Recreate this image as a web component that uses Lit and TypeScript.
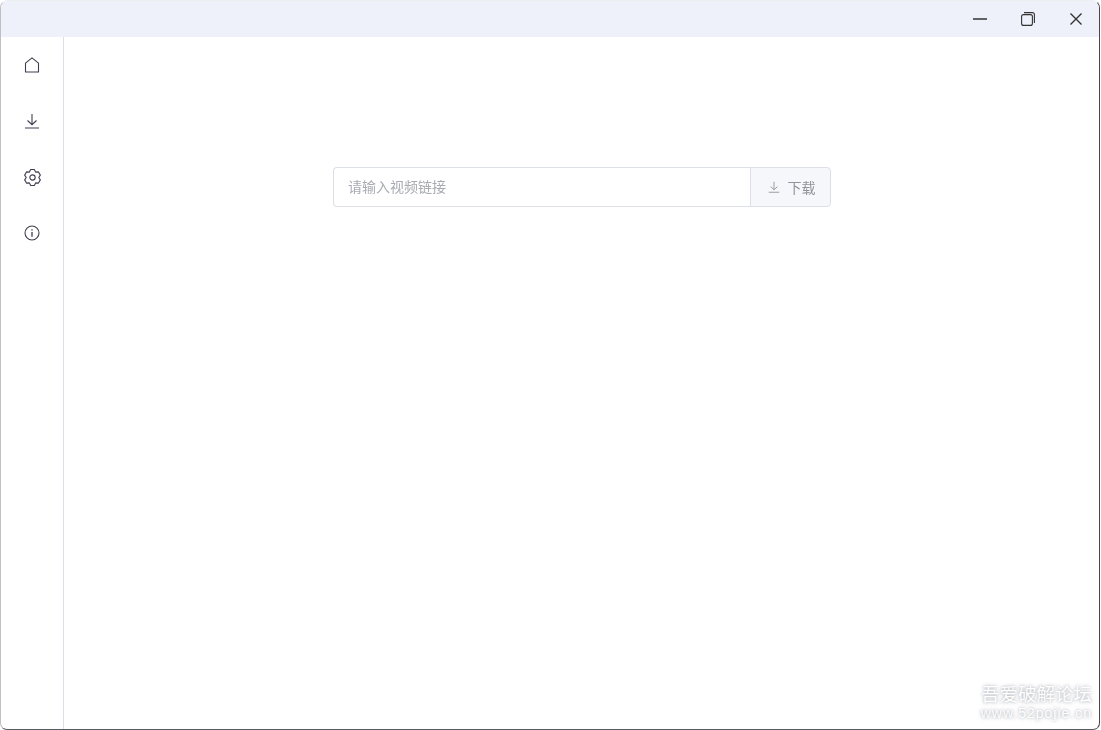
import { LitElement, html, css } from "lit";
import { customElement } from "lit/decorators.js";

function gearPath(): string {
  const pts: string[] = [];
  for (let i = 0; i < 6; i++) {
    const a = -90 + 60 * i;
    const p = (deg: number, r: number) => {
      const t = (deg * Math.PI) / 180;
      return `${(8 + r * Math.cos(t)).toFixed(2)} ${(8 + r * Math.sin(t)).toFixed(2)}`;
    };
    pts.push(p(a - 13, 7.7), p(a + 13, 7.7), p(a + 30, 5.9));
  }
  return "M" + pts.join("L") + "Z";
}

@customElement("app-root")
export class AppRoot extends LitElement {
  static styles = css`
    :host { display: block; width: 1101px; height: 730px; overflow: hidden; background: #fff; font-family: "Noto Sans CJK SC", "Liberation Sans", sans-serif; }
    * { box-sizing: border-box; }
    .window { position: relative; width: 1100px; height: 730px; border-style: solid; border-width: 1px; border-color: #eceef2 #47474d #5a5a62 #c0c0c4; border-radius: 8px 8px 7px 7px; overflow: hidden; background: #fff; display: flex; flex-direction: column; }
    .titlebar { height: 36px; flex: none; background: #eef1f9; display: flex; justify-content: flex-end; }
    .winbtns { display: flex; margin-right: -1px; }
    .winbtn { width: 48px; height: 36px; display: flex; align-items: center; justify-content: center; color: #333; }
    .body { flex: 1; display: flex; min-height: 0; }
    .side { width: 63px; flex: none; border-right: 1px solid #dcdfe6; display: flex; flex-direction: column; align-items: center; }
    .nav { width: 100%; height: 56px; display: flex; align-items: center; justify-content: center; color: #3f3f52; }
    .main { flex: 1; display: flex; justify-content: center; padding-top: 130px; padding-left: 1px; }
    .field { width: 498px; height: 40px; display: flex; font-size: 14px; }
    .input { flex: 1; border: 1px solid #dcdfe6; border-right: 0; border-radius: 4px 0 0 4px; padding: 0 0 2px 14px; display: flex; align-items: center; color: #a8abb2; }
    .btn { width: 81px; border: 1px solid #dcdfe6; border-radius: 0 4px 4px 0; background: #f5f7fa; color: #909399; display: flex; align-items: center; justify-content: center; gap: 8px; padding-left: 2px; }
    .label { will-change: opacity; }
    .wm { position: absolute; right: 7px; bottom: 9px; text-align: right; color: #fff; text-shadow: 0 0 4px #b4b6be, 0 0 2px #c8cad0; line-height: 1; }
    .wm1 { font-size: 18.5px; margin-bottom: 4px; }
    .wm2 { font-family: "Liberation Sans", sans-serif; font-size: 14px; letter-spacing: 1px; }
    svg { display: block; fill: none; stroke: currentColor; }
  `;

  render() {
    return html`
      <div class="window">
        <div class="titlebar">
          <div class="winbtns">
            <div class="winbtn"><svg width="14" height="14" viewBox="0 0 14 14" stroke-width="1.6"><path d="M0 7h14"/></svg></div>
            <div class="winbtn"><svg width="14" height="14" viewBox="0 0 14 14" stroke-width="1.1"><rect x="0.6" y="2.6" width="10.8" height="10.8" rx="2"/><path d="M3 .6h8.4A2 2 0 0 1 13.4 2.6V11"/></svg></div>
            <div class="winbtn"><svg width="14" height="14" viewBox="0 0 14 14" stroke-width="1.4"><path d="M1.5 1.5l11 11M12.5 1.5l-11 11"/></svg></div>
          </div>
        </div>
        <div class="body">
          <div class="side">
            <div class="nav"><svg width="16" height="16" viewBox="0 0 16 16" stroke-width="1.1"><path d="M1.5 15h13V6.2L8 .8 1.5 6.2z" stroke-linejoin="round"/></svg></div>
            <div class="nav"><svg width="16" height="16" viewBox="0 0 16 16" stroke-width="1.1"><path d="M1 15h14M8 1v10.5M3.5 7.5 8 11.7l4.5-4.2"/></svg></div>
            <div class="nav"><svg width="17" height="17" viewBox="0 0 16 16" stroke-width="1.05"><circle cx="8" cy="8" r="2.5"/><path d=${gearPath()} stroke-linejoin="round"/></svg></div>
            <div class="nav"><svg width="16" height="16" viewBox="0 0 16 16" stroke-width="1.1"><circle cx="8" cy="8" r="7"/><path d="M8 7v4.8" stroke-width="1.3"/><path d="M8 4.2v1.3" stroke-width="1.4"/></svg></div>
          </div>
          <div class="main">
            <div class="field">
              <div class="input"><span class="label">请输入视频链接</span></div>
              <div class="btn"><svg width="12" height="12" viewBox="0 0 16 16" stroke-width="1.2"><path d="M1 15h14M8 1v10.5M3.5 7.5 8 11.7l4.5-4.2"/></svg><span class="label">下载</span></div>
            </div>
          </div>
        </div>
        <div class="wm"><div class="wm1">吾爱破解论坛</div><div class="wm2">www.52pojie.cn</div></div>
      </div>
    `;
  }
}
